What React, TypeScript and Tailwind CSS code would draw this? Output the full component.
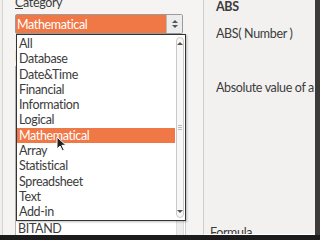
const categories = [
  'All',
  'Database',
  'Date&Time',
  'Financial',
  'Information',
  'Logical',
  'Mathematical',
  'Array',
  'Statistical',
  'Spreadsheet',
  'Text',
  'Add-in',
];

const functions = ['ABS', 'ACOS', 'ACOSH', 'ACOT', 'ACOTH', 'ASIN', 'ASINH', 'ATAN', 'ATAN2', 'ATANH', 'BITAND'];

const ListScrollbar = () => (
  <div className="w-[10px] h-full flex justify-center py-[2px] bg-white">
    <div className="w-[8px] h-full rounded-full border border-[#c9c9c9] bg-[#f7f7f7] flex flex-col items-center justify-between py-[4px]">
      <span className="w-0 h-0 border-x-[3px] border-x-transparent border-b-[3px] border-b-[#555]" />
      <span className="flex flex-col gap-[1px]">
        <span className="w-[4px] h-px bg-[#bdbdbd]" />
        <span className="w-[4px] h-px bg-[#bdbdbd]" />
        <span className="w-[4px] h-px bg-[#bdbdbd]" />
      </span>
      <span className="w-0 h-0 border-x-[3px] border-x-transparent border-t-[3px] border-t-[#555]" />
    </div>
  </div>
);

const App = () => {
  return (
    <div className="w-[320px] h-[240px] overflow-hidden flex flex-col bg-[#1c1c1c] text-[#3c3c3c] font-['Lato','Liberation_Sans',sans-serif] text-[12.5px] tracking-[-0.35px]">
      <div className="h-[235px] flex">
        {/* left side: category + function list */}
        <div className="relative w-[203px] bg-[#f5f4f3] flex">
          <div className="w-[3px] bg-[#f0efee] border-r border-[#d6d5d3]" />
          <div className="flex-1 flex flex-col pl-[12px] pr-[16px]">
            <div className="h-[14px] -mt-[5px] leading-[15px]">
              <span className="underline underline-offset-1">C</span>ategory
            </div>
            <div className="mt-[5px] h-[20px] w-[168px] flex border border-[#9c9c9c] rounded-[2px] bg-white">
              <div className="flex-1 bg-[#f07746] text-white leading-[20px] pl-[1px]">Mathematical</div>
              <div className="w-[16px] border-l border-[#bdbdbd] bg-[#ececec] flex flex-col items-center justify-center gap-[2px]">
                <span className="w-0 h-0 border-x-[3px] border-x-transparent border-b-[3px] border-b-[#555]" />
                <span className="w-0 h-0 border-x-[3px] border-x-transparent border-t-[3px] border-t-[#555]" />
              </div>
            </div>
            <div className="mt-[16px] h-[14px] leading-[14px]">Function</div>
            <div className="mt-[2px] flex-1 w-[171px] flex bg-white border-l border-t border-[#b5b5b5] overflow-hidden">
              <div className="flex-1 pt-[1px] pl-[2px] leading-[15.3px]">
                {functions.map((f) => (
                  <div key={f}>{f}</div>
                ))}
              </div>
              <div className="w-[11px] flex justify-center bg-white border-r border-[#cfcfcf]">
                <div className="w-[8px] h-full bg-[#ededed] border-x border-[#dcdcdc]" />
              </div>
            </div>
          </div>

          {/* open category popup */}
          <div className="absolute left-[16px] top-[34px] w-[170px] h-[187px] border border-[#333] bg-white flex shadow-[1px_1px_2px_rgba(0,0,0,0.25)]">
            <div className="flex-1 pt-[1px] leading-[15.3px]">
              {categories.map((c) => (
                <div key={c} className={c === 'Mathematical' ? 'bg-[#f07746] text-white pl-[2px]' : 'pl-[2px]'}>
                  {c}
                </div>
              ))}
            </div>
            <ListScrollbar />
          </div>

          {/* mouse pointer */}
          <svg className="absolute left-[56px] top-[136px]" width="11" height="16" viewBox="0 0 11 16">
            <path d="M1 1 L1 13 L4 10 L6.5 15 L8.3 14.2 L5.9 9.3 L10 9.3 Z" fill="#222" stroke="#fff" strokeWidth="1" strokeLinejoin="round" />
          </svg>
        </div>

        {/* right side: function details */}
        <div className="flex-1 bg-[#f2f1f0] border-l border-[#cfcecc] border-b border-b-white overflow-hidden whitespace-nowrap flex flex-col pl-[12px]">
          <div className="-mt-[1px] h-[16px] leading-[16px] font-bold">ABS</div>
          <div className="mt-[11px] leading-[16px]">ABS( Number )</div>
          <div className="mt-[38px] leading-[16px]">Absolute value of a number.</div>
          <div className="mt-auto -mb-[7px] -ml-[6px] leading-[16px]">Formula</div>
        </div>
        <div className="w-[5px] bg-[#3c3b37]" />
      </div>
    </div>
  );
};

export default App;
